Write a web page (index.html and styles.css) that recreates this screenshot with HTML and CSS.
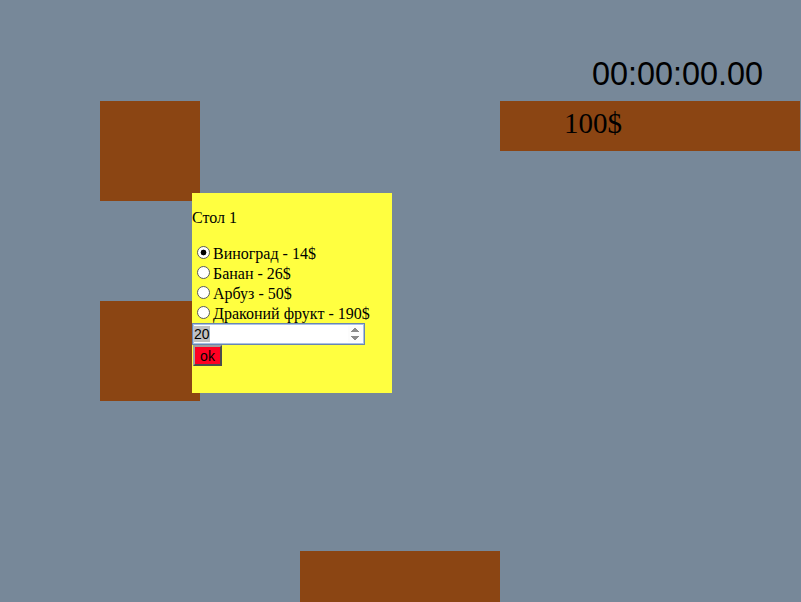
FILE: index.html
```html
<!DOCTYPE html>
<html lang="ru">
<head>
<meta charset="utf-8">
<title>Кафе</title>
<link rel="stylesheet" href="styles.css">
</head>
<body>
<div class="stage">
  <div class="timer">00:00:00.00</div>
  <div class="wallet">100$</div>
  <div class="table table-1"></div>
  <div class="table table-2"></div>
  <div class="table table-bottom"></div>
  <div class="order">
    <p class="order-title">Стол 1</p>
    <label class="choice"><input type="radio" name="fruit" checked>Виноград - 14$</label>
    <label class="choice"><input type="radio" name="fruit">Банан - 26$</label>
    <label class="choice"><input type="radio" name="fruit">Арбуз - 50$</label>
    <label class="choice"><input type="radio" name="fruit">Драконий фрукт - 190$</label>
    <input class="qty" type="number" value="20">
    <div><button class="ok">ok</button></div>
  </div>
</div>
<script src="script.js"></script>
</body>
</html>
```
FILE: styles.css
```css
html, body {
  margin: 0;
  padding: 0;
  background: #778899;
}
body {
  font-family: "Liberation Serif", serif;
  font-size: 16px;
  color: #000;
}
.stage {
  position: relative;
  width: 801px;
  height: 602px;
  overflow: hidden;
}
.timer {
  position: absolute;
  left: 592px;
  top: 56px;
  font-family: "Liberation Sans", Arial, sans-serif;
  font-size: 32.4px;
}
.wallet {
  position: absolute;
  left: 500px;
  top: 101px;
  width: 300px;
  height: 50px;
  box-sizing: border-box;
  padding: 6px 0 0 64px;
  background: #8b4513;
  font-size: 29px;
}
.table {
  position: absolute;
  background: #8b4513;
}
.table-1 { left: 100px; top: 101px; width: 100px; height: 100px; }
.table-2 { left: 100px; top: 301px; width: 100px; height: 100px; }
.table-bottom { left: 300px; top: 551px; width: 200px; height: 51px; }
.order {
  position: absolute;
  left: 192px;
  top: 193px;
  width: 200px;
  height: 200px;
  background: #ffff40;
}
.order-title {
  margin: 16px 0;
}
.choice {
  display: block;
  height: 20px;
}
.choice input {
  -webkit-appearance: none;
  appearance: none;
  box-sizing: border-box;
  margin: 3px 3px 0 5px;
  width: 13px;
  height: 13px;
  border: 1px solid #5a5a5a;
  border-radius: 50%;
  background: #fff;
  vertical-align: baseline;
}
.choice input:checked {
  background: radial-gradient(circle, #000 0 2.6px, #fff 3.2px);
}
.qty {
  display: block;
  box-sizing: border-box;
  width: 173px;
  height: 22px;
  margin: 0;
  padding: 1px;
  font-family: "Liberation Sans", Arial, sans-serif;
  font-size: 14px;
  border: 1px solid #6a86b0;
  box-shadow: inset 0 0 0 1px #a9c1e6;
  outline: none;
  background: #fff;
}
.qty::selection {
  background: #c0c0c0;
  color: #000;
}
.qty::-webkit-inner-spin-button {
  opacity: 1;
}
.ok {
  margin: 0 0 0 1px;
  height: 21px;
  width: 29px;
  padding: 0;
  font-family: "Liberation Sans", Arial, sans-serif;
  font-size: 14px;
  color: #000;
  background: #ff0022;
  border: 2px outset #a0a0a0;
  border-radius: 0;
}
```
FILE: script.js
```js
var q = document.querySelector('.qty');
q.focus();
try { q.select(); } catch (e) {}
```
